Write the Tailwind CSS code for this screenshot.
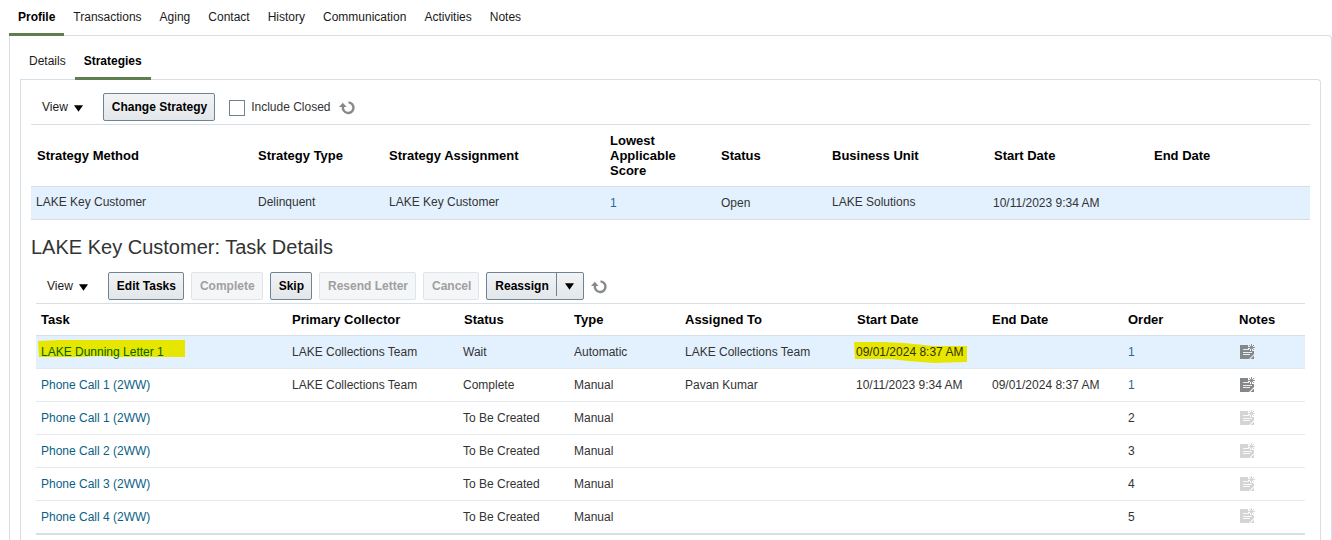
<!DOCTYPE html>
<html lang="en">
<head>
<meta charset="utf-8">
<meta name="viewport" content="width=device-width, initial-scale=1">
<title>LAKE Key Customer: Strategies</title>
<script src="https://cdn.jsdelivr.net/npm/@tailwindcss/browser@4"></script>
</head>
<body class="bg-white font-['Liberation_Sans',Arial,sans-serif] text-xs text-[#333333]">
<svg class="hidden" aria-hidden="true">
  <symbol id="note" viewBox="0 0 15 15">
    <path fill="currentColor" d="M0 1H8V5H10V7H14V10L9 15H0Z"/>
    <path fill="#fff" fill-opacity=".85" d="M3 5H9V6H3ZM3 8H12V9H3ZM3 10H10V11H3Z"/>
    <path fill="currentColor" d="M14 11.5V15H10.5Z"/>
    <path stroke="currentColor" stroke-width=".9" fill="none" d="M11.5 0V7M8 3.5H15M9 1L14 6M14 1L9 6"/>
  </symbol>
  <symbol id="refresh" viewBox="0 0 16 14">
    <path fill="none" stroke="currentColor" stroke-width="2.4" d="M9.5 1.4A5.3 5.3 0 1 1 4 5.5"/>
    <path fill="currentColor" d="M0 6L3.8 1.8L7.6 6Z"/>
  </symbol>
  <symbol id="caret" viewBox="0 0 10 7"><path fill="#000" d="M0 0H10L5 7Z"/></symbol>
</svg>

<nav class="flex pl-[9px] text-[#1a1a1a]">
  <a href="#" class="relative z-10 -mb-px h-9 border-b-3 border-[#5f7d4f] px-[9px] pt-2.5 leading-[14px] font-bold text-black">Profile</a>
  <a href="#" class="px-[9px] pt-2.5 leading-[14px]">Transactions</a>
  <a href="#" class="px-[9px] pt-2.5 leading-[14px]">Aging</a>
  <a href="#" class="px-[9px] pt-2.5 leading-[14px]">Contact</a>
  <a href="#" class="px-[9px] pt-2.5 leading-[14px]">History</a>
  <a href="#" class="px-[9px] pt-2.5 leading-[14px]">Communication</a>
  <a href="#" class="px-[9px] pt-2.5 leading-[14px]">Activities</a>
  <a href="#" class="px-[9px] pt-2.5 leading-[14px]">Notes</a>
</nav>

<main class="ml-[9px] rounded-tr-sm border border-b-0 border-[#d6dfe6] pr-2.5 pl-2.5">
  <nav class="flex pt-2 text-[#1a1a1a]">
    <a href="#" class="px-[9px] pt-2.5 leading-[14px]">Details</a>
    <a href="#" class="relative z-10 -mb-px h-9 border-b-3 border-[#5f7d4f] px-[9px] pt-2.5 leading-[14px] font-bold text-black">Strategies</a>
  </nav>

  <section class="rounded-tr-sm border border-b-0 border-[#d6dfe6] px-2.5 pt-[13px] pb-4">
    <div class="flex h-[31px] items-start pl-[11px]">
      <button class="mr-5 flex h-7 items-center gap-1.5 text-[#1a1a1a]">View <svg class="mt-0.5 h-[7px] w-[9px]"><use href="#caret"/></svg></button>
      <button class="mr-3.5 h-7 rounded-xs border border-[#6d8396] bg-linear-to-b from-[#f1f3f5] to-[#e3e7ea] pr-[7px] pl-2 font-bold text-black">Change Strategy</button>
      <label class="flex h-7 items-center gap-1.5"><input type="checkbox" class="mt-0.5 size-4 appearance-none border border-[#6d8396] bg-white">Include Closed</label>
      <button class="ml-2 flex h-7 items-center text-[#87898b]" aria-label="Refresh"><svg class="mt-0.5 h-3.5 w-4"><use href="#refresh"/></svg></button>
    </div>

    <table class="w-full table-fixed border-collapse text-left">
      <colgroup><col class="w-[221px]"><col class="w-[131px]"><col class="w-[221px]"><col class="w-[111px]"><col class="w-[111px]"><col class="w-[162px]"><col class="w-[161px]"><col></colgroup>
      <thead>
        <tr class="h-[62px] border-y border-[#d6dfe6] text-[13px] leading-[15px] text-black">
          <th class="px-1.5">Strategy Method</th><th class="px-1.5">Strategy Type</th><th class="px-1.5">Strategy Assignment</th><th class="px-1.5">Lowest Applicable Score</th><th class="px-1.5">Status</th><th class="px-1.5">Business Unit</th><th class="px-1.5">Start Date</th><th class="px-[5px]">End Date</th>
        </tr>
      </thead>
      <tbody>
        <tr class="h-[33px] border-b border-[#d9dcdf] bg-[#e3f1ff]">
          <td class="px-[5px] pb-0.5">LAKE Key Customer</td><td class="px-1.5 pb-0.5">Delinquent</td><td class="px-1.5 pb-0.5">LAKE Key Customer</td><td class="px-1.5"><a href="#" class="text-[#2a6a92]">1</a></td><td class="px-1.5">Open</td><td class="px-1.5 pb-0.5">LAKE Solutions</td><td class="px-[5px]">10/11/2023 9:34 AM</td><td></td>
        </tr>
      </tbody>
    </table>

    <h2 class="pt-3.5 text-xl leading-[26px]">LAKE Key Customer: Task Details</h2>

    <div class="px-[5px] pt-3">
      <div class="flex h-[31px] items-start gap-[7px] pl-[11px]">
        <button class="mr-[13px] flex h-7 items-center gap-1.5 text-[#1a1a1a]">View <svg class="mt-0.5 h-[7px] w-[9px]"><use href="#caret"/></svg></button>
        <button class="h-7 rounded-xs border border-[#6d8396] bg-linear-to-b from-[#f1f3f5] to-[#e3e7ea] pr-[7px] pl-2 font-bold text-black">Edit Tasks</button>
        <button disabled class="h-7 rounded-xs border border-[#dfe4e8] bg-[#f4f6f8] pr-[7px] pl-2 font-bold text-[#a0a0a0]">Complete</button>
        <button class="h-7 rounded-xs border border-[#6d8396] bg-linear-to-b from-[#f1f3f5] to-[#e3e7ea] pr-[7px] pl-2 font-bold text-black">Skip</button>
        <button disabled class="h-7 rounded-xs border border-[#dfe4e8] bg-[#f4f6f8] pr-[7px] pl-2 font-bold text-[#a0a0a0]">Resend Letter</button>
        <button disabled class="h-7 rounded-xs border border-[#dfe4e8] bg-[#f4f6f8] pr-[7px] pl-2 font-bold text-[#a0a0a0]">Cancel</button>
        <div class="flex h-7 rounded-xs border border-[#6d8396] bg-linear-to-b from-[#f1f3f5] to-[#e3e7ea]">
          <button class="pr-[7px] pl-2 font-bold text-black">Reassign</button>
          <span class="mb-[3px] w-px bg-[#6d8396]"></span>
          <button class="flex w-[26px] items-center justify-center" aria-label="Reassign options"><svg class="h-[7px] w-[9px]"><use href="#caret"/></svg></button>
        </div>
        <button class="flex h-7 items-center text-[#87898b]" aria-label="Refresh"><svg class="mt-0.5 h-3.5 w-4"><use href="#refresh"/></svg></button>
      </div>

      <table class="w-full table-fixed border-collapse border-b-2 border-[#d6dfe6] text-left">
        <colgroup><col class="w-[251px]"><col class="w-[171px]"><col class="w-[111px]"><col class="w-[111px]"><col class="w-[171px]"><col class="w-[136px]"><col class="w-[136px]"><col class="w-[110px]"><col></colgroup>
        <thead>
          <tr class="h-8 border-y border-[#d6dfe6] text-[13px] leading-[15px] text-black">
            <th class="px-[5px]">Task</th><th class="px-[5px]">Primary Collector</th><th class="px-1.5">Status</th><th class="px-[5px]">Type</th><th class="px-[5px]">Assigned To</th><th class="px-1.5">Start Date</th><th class="px-[5px]">End Date</th><th class="px-[5px]">Order</th><th class="px-1.5">Notes</th>
          </tr>
        </thead>
        <tbody>
          <tr class="h-[33px] border-b border-[#e6e9ec] bg-[#e3f1ff]">
            <td class="px-[5px]"><div class="relative"><svg class="absolute -top-1 -left-[3px] h-[18px] w-[148px]" viewBox="0 0 148 18" aria-hidden="true"><path fill="#e6e600" d="M0 1L22 0H147V17H86L60 16L40 17H1Z"/></svg><a href="#" class="relative text-[#006400]">LAKE Dunning Letter 1</a></div></td>
            <td class="px-[5px]">LAKE Collections Team</td><td class="px-[5px]">Wait</td><td class="px-[5px]">Automatic</td><td class="px-[5px]">LAKE Collections Team</td>
            <td class="px-[5px]"><div class="relative"><svg class="absolute -top-0.5 -left-0.5 h-[21px] w-[114px]" viewBox="0 0 114 21" aria-hidden="true"><path fill="#e6e600" d="M0 0H30L50 1L80 4H113V20L80 21L54 19L35 17H1Z"/></svg><span class="relative text-[#303000]">09/01/2024 8:37 AM</span></div></td>
            <td></td><td class="px-[5px]"><a href="#" class="text-[#2a6a92]">1</a></td><td class="px-[7px] pb-0.5"><button class="block text-[#85888b]" aria-label="Notes"><svg class="size-[15px]"><use href="#note"/></svg></button></td>
          </tr>
          <tr class="h-[33px] border-b border-[#e6e9ec]">
            <td class="px-[5px]"><a href="#" class="text-[#0b5f86]">Phone Call 1 (2WW)</a></td>
            <td class="px-[5px]">LAKE Collections Team</td><td class="px-[5px]">Complete</td><td class="px-[5px]">Manual</td><td class="px-[5px]">Pavan Kumar</td><td class="px-[5px]">10/11/2023 9:34 AM</td><td class="px-[5px]">09/01/2024 8:37 AM</td><td class="px-[5px]"><a href="#" class="text-[#2a6a92]">1</a></td><td class="px-[7px] pb-0.5"><button class="block text-[#85888b]" aria-label="Notes"><svg class="size-[15px]"><use href="#note"/></svg></button></td>
          </tr>
          <tr class="h-[33px] border-b border-[#e6e9ec]">
            <td class="px-[5px]"><a href="#" class="text-[#0b5f86]">Phone Call 1 (2WW)</a></td>
            <td></td><td class="px-[5px]">To Be Created</td><td class="px-[5px]">Manual</td><td></td><td></td><td></td><td class="px-[5px]">2</td><td class="px-[7px] pb-0.5"><button disabled class="block text-[#d2d4d5]" aria-label="Notes"><svg class="size-[15px]"><use href="#note"/></svg></button></td>
          </tr>
          <tr class="h-[33px] border-b border-[#e6e9ec]">
            <td class="px-[5px]"><a href="#" class="text-[#0b5f86]">Phone Call 2 (2WW)</a></td>
            <td></td><td class="px-[5px]">To Be Created</td><td class="px-[5px]">Manual</td><td></td><td></td><td></td><td class="px-[5px]">3</td><td class="px-[7px] pb-0.5"><button disabled class="block text-[#d2d4d5]" aria-label="Notes"><svg class="size-[15px]"><use href="#note"/></svg></button></td>
          </tr>
          <tr class="h-[33px] border-b border-[#e6e9ec]">
            <td class="px-[5px]"><a href="#" class="text-[#0b5f86]">Phone Call 3 (2WW)</a></td>
            <td></td><td class="px-[5px]">To Be Created</td><td class="px-[5px]">Manual</td><td></td><td></td><td></td><td class="px-[5px]">4</td><td class="px-[7px] pb-0.5"><button disabled class="block text-[#d2d4d5]" aria-label="Notes"><svg class="size-[15px]"><use href="#note"/></svg></button></td>
          </tr>
          <tr class="h-[33px]">
            <td class="px-[5px]"><a href="#" class="text-[#0b5f86]">Phone Call 4 (2WW)</a></td>
            <td></td><td class="px-[5px]">To Be Created</td><td class="px-[5px]">Manual</td><td></td><td></td><td></td><td class="px-[5px]">5</td><td class="px-[7px] pb-0.5"><button disabled class="block text-[#d2d4d5]" aria-label="Notes"><svg class="size-[15px]"><use href="#note"/></svg></button></td>
          </tr>
        </tbody>
      </table>
    </div>
  </section>
</main>
</body>
</html>
